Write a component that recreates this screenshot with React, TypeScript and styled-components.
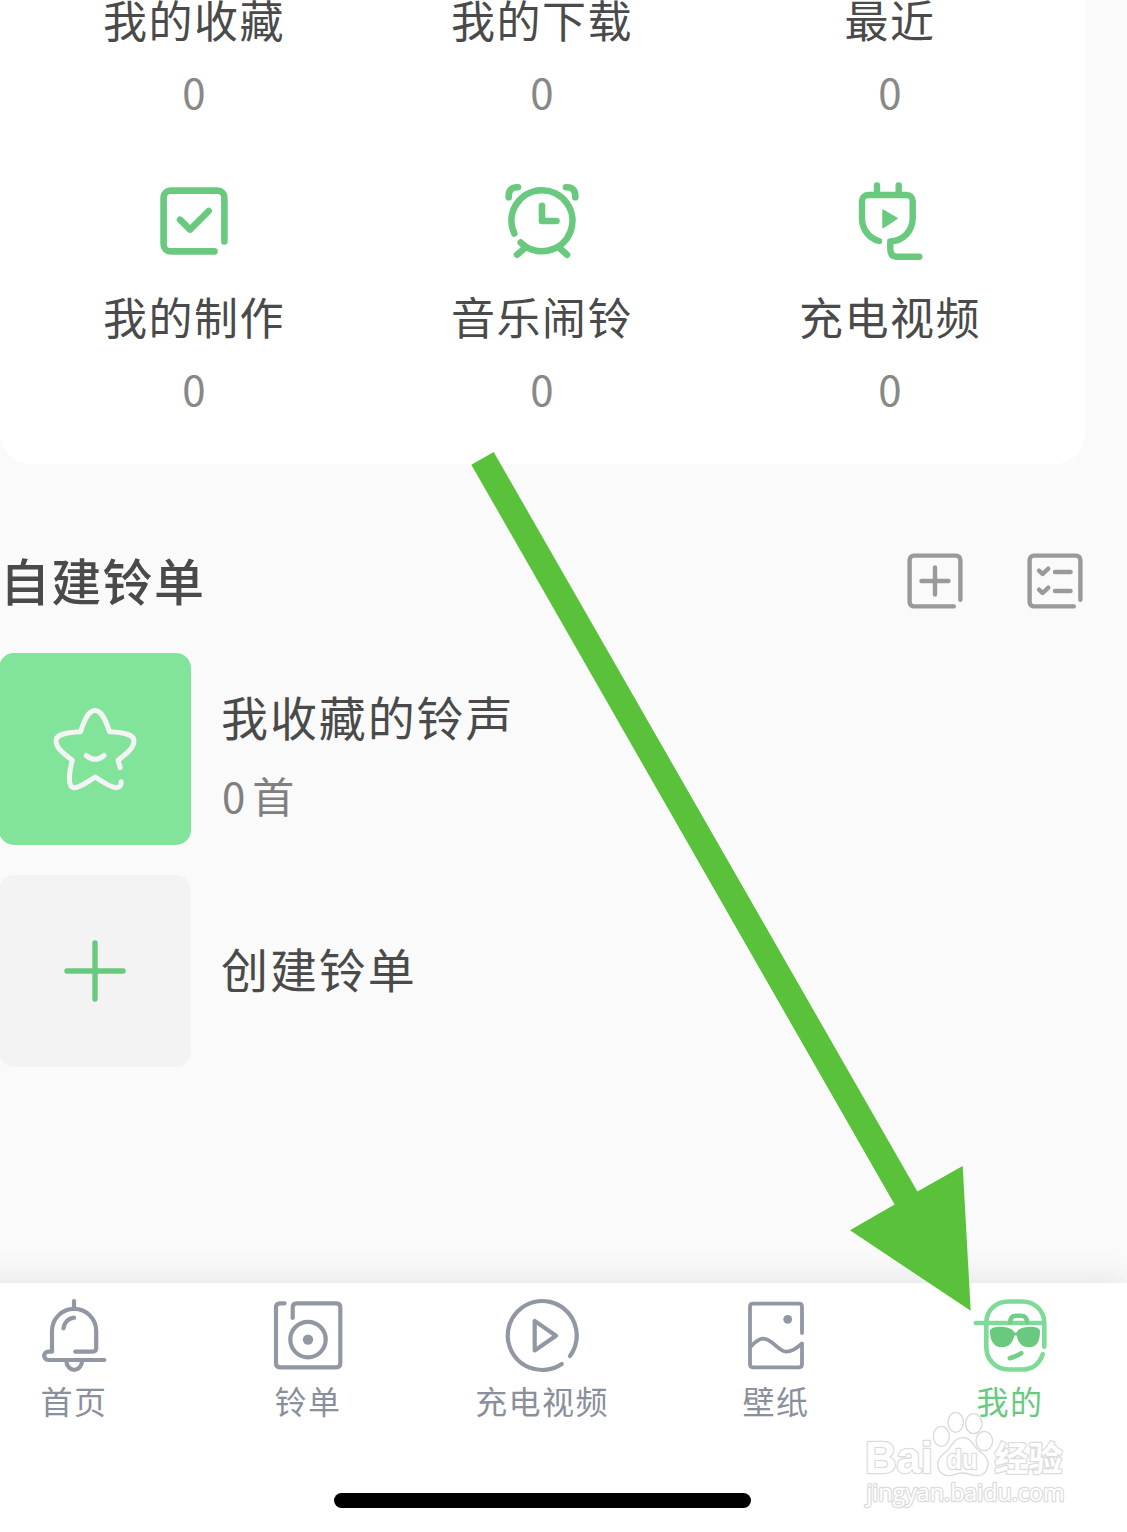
import React from "react";
import styled, { createGlobalStyle } from "styled-components";

const GREEN = "#68c97f";
const SLATE = "#9297a4";
const INK = "#4a4a4a";

const GlobalStyle = createGlobalStyle`
  html, body { margin: 0; padding: 0; background: #fafafa; }
  * { box-sizing: border-box; }
  body { overflow: hidden; }
`;

const Screen = styled.main`
  position: relative;
  display: flex;
  flex-direction: column;
  width: 1127px;
  height: 1532px;
  overflow: hidden;
  background: #fafafa;
  color: ${INK};
  font-family: "Noto Sans CJK SC", "Noto Sans", sans-serif;
`;

const StatsCard = styled.section`
  display: grid;
  grid-template-columns: repeat(3, 348px);
  align-content: start;
  row-gap: 65px;
  width: 1085px;
  height: 464px;
  padding: 0 21px 0 20px;
  background: #fff;
  border-radius: 0 0 30px 30px;
`;

const Stat = styled.div`
  display: flex;
  flex-direction: column;
  align-items: center;
`;

const StatIcon = styled.div`
  width: 80px;
  height: 80px;
  margin-bottom: 36px;
`;

const StatLabel = styled.div`
  font-size: 44px;
  line-height: 39px;
  letter-spacing: 1.5px;
  white-space: nowrap;
  font-weight: 400;
`;

const StatCount = styled.div`
  margin-top: 27px;
  font-size: 42px;
  line-height: 50px;
  color: #888;
`;

const SectionHeader = styled.header`
  display: flex;
  align-items: center;
  justify-content: space-between;
  height: 56px;
  margin-top: 89px;
  padding: 0 44px 0 0;
`;

const SectionTitle = styled.h2`
  margin: 0;
  padding-bottom: 5px;
  font-size: 50px;
  line-height: 54px;
  font-weight: 500;
  letter-spacing: 1.3px;
`;

const Actions = styled.div`
  display: flex;
  gap: 64px;
`;

const IconButton = styled.button`
  display: block;
  width: 56px;
  height: 56px;
  padding: 0;
  border: 0;
  background: none;
`;

const PlayLists = styled.div`
  display: flex;
  flex-direction: column;
  gap: 30px;
  margin: 44px 0 0 -1px;
`;

const PlayListRow = styled.div`
  display: flex;
  align-items: center;
  gap: 30px;
`;

const Cover = styled.div<{ $bg: string }>`
  display: flex;
  align-items: center;
  justify-content: center;
  width: 192px;
  height: 192px;
  border-radius: 15px;
  background: ${(p) => p.$bg};
`;

const PlayListText = styled.div`
  display: flex;
  flex-direction: column;
  gap: 17px;
  padding-top: 7px;
`;

const PlayListName = styled.div`
  padding-bottom: 7px;
  font-size: 47px;
  line-height: 60px;
  letter-spacing: 1.9px;
`;

const PlayListMeta = styled.div`
  display: flex;
  gap: 7px;
  height: 50px;
  padding-left: 1px;
  font-size: 42px;
  line-height: 50px;
  color: #808080;
`;

const TabBar = styled.nav`
  display: grid;
  grid-template-columns: repeat(5, 234px);
  align-content: start;
  height: 249px;
  width: 1170px;
  margin: auto 0 0 -43px;
  padding-top: 13px;
  background: #fff;
  box-shadow: 0 0 32px rgba(20, 50, 40, 0.13);
`;

const Tab = styled.div<{ $active?: boolean }>`
  display: flex;
  flex-direction: column;
  align-items: center;
  font-size: 32px;
  line-height: 48px;
  letter-spacing: 1.4px;
  color: ${(p) => (p.$active ? GREEN : "#8a8f9c")};
`;

const TabIcon = styled.div`
  width: 80px;
  height: 80px;
`;

const HomeIndicator = styled.div`
  position: absolute;
  left: 334px;
  bottom: 24px;
  width: 417px;
  height: 15px;
  border-radius: 8px;
  background: #000;
`;

const ArrowOverlay = styled.svg`
  position: absolute;
  left: 0;
  top: 0;
  pointer-events: none;
`;

const Watermark = styled.svg`
  position: absolute;
  left: 860px;
  top: 1408px;
  pointer-events: none;

  text {
    paint-order: stroke;
    stroke-width: 2.6px;
    stroke: #dcdcdc;
    stroke-linejoin: round;
    fill: #fff;
    fill-opacity: 1;
  }
`;

const Glyph = styled.svg`
  display: block;
  fill: none;
  stroke-linecap: round;
  stroke-linejoin: round;
`;

const MadeIcon = () => (
  <Glyph width="80" height="80" stroke={GREEN} strokeWidth="6.6">
    <path d="M70.4 60.4V16.6a7 7 0 0 0-7-7H16.6a7 7 0 0 0-7 7v46.8a7 7 0 0 0 7 7h43.8" />
    <path d="M26 38.7 36 48.6 54.7 30" />
  </Glyph>
);

const AlarmIcon = () => (
  <Glyph width="80" height="80" stroke={GREEN} strokeWidth="6.6">
    <path d="M12.3 52.6A30.5 30.5 0 1 1 18.7 61.6" />
    <path d="M15 73.7 23 67M65 73.7 57.5 67M40 24.7V40H54.5" />
    <path d="M6.7 16.3C6.3 9 10 5.8 16 6.3M73.3 16.3C73.7 9 70 5.8 64 6.3" />
  </Glyph>
);

const PlugIcon = () => (
  <Glyph width="80" height="80" stroke={GREEN} strokeWidth="6.4">
    <path d="M27 4.4V13M48.7 4.4V13" />
    <path d="M29 60C18.5 57 12 48 12 37V20a6 6 0 0 1 6-6h38.7a6 6 0 0 1 6 6v17C62.7 50 53 60 40.3 60.4V68q0 7.7 7 7.7H69.3" />
    <path d="M33 29v17.6L47 37.4Z" fill={GREEN} strokeWidth="1.4" />
  </Glyph>
);

const FRAME = "M53.4 46.8V7a4.4 4.4 0 0 0-4.4-4.4H7A4.4 4.4 0 0 0 2.6 7v42A4.4 4.4 0 0 0 7 53.4h39.8";

const AddIcon = () => (
  <Glyph width="56" height="56" stroke="#9a9a9a" strokeWidth="4.4">
    <path d={FRAME} />
    <path d="M28 14.5v27M14.5 28h27" />
  </Glyph>
);

const ManageIcon = () => (
  <Glyph width="56" height="56" stroke="#9a9a9a" strokeWidth="4.4">
    <path d={FRAME} />
    <path d="M12 17.7 15.7 21 21.3 15.7M28 19H43.6M12 36.7 15.7 40 21.3 34.7M28 38H43.6" />
  </Glyph>
);

const StarIcon = () => (
  <Glyph width="90" height="90" stroke="#f4f4f4" strokeWidth="5">
    <path d="M70.2 63.7 68 56.3C76 50 84 44 84 37C84 31 76 28.5 59.5 27.7C55 14 51 6.5 45 6.5C39 6.5 35 14 30.6 27.7C14 28.5 6 31 6 37C6 44 14 50 22.3 56.3C19 69 17.5 82.5 23.5 83.7C28 84.5 36 79 45.3 73C54 79 62 83.7 66.5 83.7C70 83.7 71.4 81 71.2 77.7" />
    <path d="M36.2 51.5Q45 59 54 51.5" />
  </Glyph>
);

const PlusIcon = () => (
  <Glyph width="90" height="90" stroke={GREEN} strokeWidth="5.4">
    <path d="M45 17V73M17 45H73" />
  </Glyph>
);

const BellIcon = () => (
  <Glyph width="80" height="80" stroke={SLATE} strokeWidth="4.2">
    <path d="M40 5v8M14.3 64H70.3M41.3 55.7H58.6q3.6 0 3.6-3.6V35a22.1 22.1 0 0 0-44.2 0V55.7H14.3a4.15 4.15 0 0 0 0 8.3" />
    <path d="M32.4 65a7.8 8.8 0 0 0 15.6 0M29.4 32.3Q31 23 40 21.7" />
  </Glyph>
);

const DiscIcon = () => (
  <Glyph width="80" height="80" stroke={SLATE} strokeWidth="4.2">
    <path d="M16.6 7.3H12Q8 7.3 8 11.3V67.3Q8 71.3 12 71.3H68.3Q72.3 71.3 72.3 67.3V11.3Q72.3 7.3 68.3 7.3H28.7Q24.7 7.3 24.7 11.3V22" />
    <circle cx="40" cy="43.6" r="17.7" />
    <circle cx="40" cy="43.6" r="5.2" fill={SLATE} stroke="none" />
  </Glyph>
);

const VideoIcon = () => (
  <Glyph width="80" height="80" stroke={SLATE} strokeWidth="4.2">
    <path d="M59.7 68A34.5 34.5 0 1 1 68 60" />
    <path d="M32.7 24.9v29.6L54 39.7Z" />
  </Glyph>
);

const WallpaperIcon = () => (
  <Glyph width="80" height="80" stroke={SLATE} strokeWidth="3.8">
    <path d="M66 37V10.7Q66 7.7 63 7.7H17Q14 7.7 14 10.7V68.3Q14 71.3 17 71.3H63Q66 71.3 66 68.3V47.4C60 53 55 56 50 55.7C42 55 36 42.7 27.3 42.7C22 42.7 18 47 14.5 51" />
    <circle cx="51.7" cy="23.3" r="4.4" fill={SLATE} stroke="none" />
  </Glyph>
);

const MineIcon = () => (
  <Glyph width="80" height="80" stroke="#7ddb97" strokeWidth="4.6">
    <path d="M74.3 50.7V27C74.3 14 64 5.5 52 5.5H38.6C26 5.5 16.3 14 16.3 27V51C16.3 64 26 73.5 38.6 73.5H52C62 73.5 69.5 68 72.7 58.3" />
    <path d="M5.8 27H74" />
    <path d="M40.3 26.5C40.3 21.5 43 19.8 46 19.8H51C54.5 19.8 57 22 57 26.5M39.8 62.2Q47 60.3 51.2 57.2" stroke="#70d088" />
    <path
      d="M20 35C20 28.5 43 29.5 44.3 36.5H46.7C48 29.5 70 28.5 70 35C70 45 67 51.3 59 51.3C51 51.3 48 46 46.7 39.5H44.3C43 46 39.5 51.3 32 51.3C24 51.3 20 45 20 35Z"
      fill={GREEN}
      stroke="none"
    />
  </Glyph>
);

type StatItem = { label: string; count: number; icon?: React.ReactNode };

const stats: StatItem[] = [
  { label: "我的收藏", count: 0 },
  { label: "我的下载", count: 0 },
  { label: "最近", count: 0 },
  { label: "我的制作", count: 0, icon: <MadeIcon /> },
  { label: "音乐闹铃", count: 0, icon: <AlarmIcon /> },
  { label: "充电视频", count: 0, icon: <PlugIcon /> },
];

const tabs = [
  { label: "首页", icon: <BellIcon /> },
  { label: "铃单", icon: <DiscIcon /> },
  { label: "充电视频", icon: <VideoIcon /> },
  { label: "壁纸", icon: <WallpaperIcon /> },
  { label: "我的", icon: <MineIcon />, active: true },
];

export default function App() {
  return (
    <>
      <GlobalStyle />
      <Screen>
        <StatsCard>
          {stats.map((s) => (
            <Stat key={s.label}>
              {s.icon && <StatIcon>{s.icon}</StatIcon>}
              <StatLabel>{s.label}</StatLabel>
              <StatCount>{s.count}</StatCount>
            </Stat>
          ))}
        </StatsCard>

        <SectionHeader>
          <SectionTitle>自建铃单</SectionTitle>
          <Actions>
            <IconButton><AddIcon /></IconButton>
            <IconButton><ManageIcon /></IconButton>
          </Actions>
        </SectionHeader>

        <PlayLists>
          <PlayListRow>
            <Cover $bg="#82e39b"><StarIcon /></Cover>
            <PlayListText>
              <PlayListName>我收藏的铃声</PlayListName>
              <PlayListMeta><span>0</span><span>首</span></PlayListMeta>
            </PlayListText>
          </PlayListRow>
          <PlayListRow>
            <Cover $bg="#f3f3f3"><PlusIcon /></Cover>
            <PlayListName>创建铃单</PlayListName>
          </PlayListRow>
        </PlayLists>

        <TabBar>
          {tabs.map((t) => (
            <Tab key={t.label} $active={t.active}>
              <TabIcon>{t.icon}</TabIcon>
              {t.label}
            </Tab>
          ))}
        </TabBar>

        <HomeIndicator />

        <Watermark width="220" height="110" fill="#fff" fillOpacity="0.8" stroke="#d9d9d9" strokeWidth="1.3">
          <text x="5" y="65" fontSize="45" fontWeight="700" fontFamily='"Liberation Sans", Arial, sans-serif' textLength="68" lengthAdjust="spacingAndGlyphs">Bai</text>
          <ellipse cx="81.3" cy="28.3" rx="8" ry="10" />
          <ellipse cx="95.7" cy="14.3" rx="7.7" ry="10" />
          <ellipse cx="113.7" cy="15.7" rx="8.2" ry="10" />
          <ellipse cx="124.3" cy="33" rx="8.3" ry="9.7" />
          <path d="M102.7 29.7C94 29.7 92 38 87 43C82 47 77.5 50 77.7 57C78 64 83 67.7 89 67.7C94 67.7 97 65 102.7 65C108 65 112 67.7 117 67.7C124 67.7 128 62 128 56C128 49 123 46 118 42C113 37 111 29.7 102.7 29.7Z" />
          <text x="86.5" y="61" fontSize="27" fontWeight="700" fontFamily='"Liberation Sans", Arial, sans-serif' textLength="31" lengthAdjust="spacingAndGlyphs">du</text>
          <text x="134.5" y="62.5" fontSize="34" fontWeight="700">经验</text>
          <text x="6.5" y="93" fontSize="23" fontWeight="400" fontFamily='"Open Sans", "Noto Sans", sans-serif' textLength="198" lengthAdjust="spacingAndGlyphs">jingyan.baidu.com</text>
        </Watermark>

        <ArrowOverlay width="1127" height="1532">
          <path d="M471.3 464.7 493.7 452 917.4 1191.5 962.7 1166 970.7 1310.8 850 1230.3 894.6 1204.5Z" fill="#5ac13a" />
        </ArrowOverlay>
      </Screen>
    </>
  );
}
